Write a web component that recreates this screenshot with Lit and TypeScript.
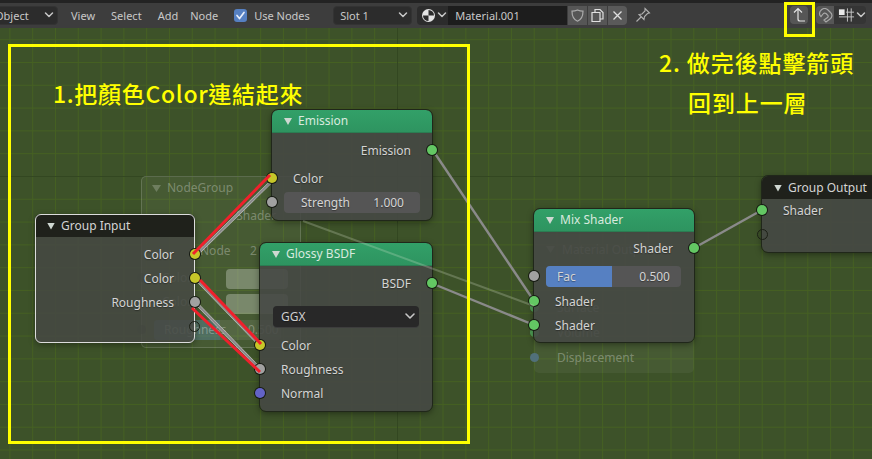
import { LitElement, html, svg, css, nothing } from "lit";
import { customElement } from "lit/decorators.js";

type Row = {
  h?: number;
  label?: string;
  side?: "in" | "out";
  sock?: string;
  field?: { name: string; value: string; fill?: number };
  select?: string;
};
type NodeDef = { x: number; y: number; w: number; h: number; title: string; kind: "green" | "dark"; sel?: boolean; pad: number; rows: Row[] };

const CANVAS_Y = 28;
const Y = "#c7c729", G = "#a1a1a1", S = "#63c763", B = "#6363c7", H = "hollow";

const NODES: NodeDef[] = [
  { x: 272, y: 110, w: 160, h: 110, title: "Emission", kind: "green", pad: 5, rows: [
    { label: "Emission", side: "out", sock: S }, { h: 4 },
    { label: "Color", side: "in", sock: Y },
    { side: "in", sock: G, field: { name: "Strength", value: "1.000" } },
  ] },
  { x: 35, y: 214, w: 160, h: 129, title: "Group Input", kind: "dark", sel: true, pad: 5, rows: [
    { label: "Color", side: "out", sock: Y },
    { label: "Color", side: "out", sock: Y },
    { label: "Roughness", side: "out", sock: G },
    { side: "out", sock: H },
  ] },
  { x: 260, y: 243, w: 172, h: 168, title: "Glossy BSDF", kind: "green", pad: 5, rows: [
    { label: "BSDF", side: "out", sock: S }, { h: 10 },
    { select: "GGX" }, { h: 4 },
    { label: "Color", side: "in", sock: Y },
    { label: "Roughness", side: "in", sock: G },
    { label: "Normal", side: "in", sock: B },
  ] },
  { x: 534, y: 209, w: 160, h: 133, title: "Mix Shader", kind: "green", pad: 4, rows: [
    { label: "Shader", side: "out", sock: S }, { h: 4 },
    { side: "in", sock: G, field: { name: "Fac", value: "0.500", fill: 49 } }, { h: 1 },
    { label: "Shader", side: "in", sock: S },
    { label: "Shader", side: "in", sock: S },
  ] },
  { x: 762, y: 176, w: 130, h: 76, title: "Group Output", kind: "dark", pad: -1, rows: [
    { label: "Shader", side: "in", sock: S },
    { side: "in", sock: H },
  ] },
];

const GREY_WIRES = [
  [196, 255, 273, 180], [195, 278, 260, 345], [195, 302, 260, 369],
  [432, 149, 534, 301], [431, 283, 534, 325], [694, 248, 762, 210],
];
const RED_WIRES = [[193, 254, 270, 175], [200, 280, 261, 344], [192, 308, 260, 372]];

const pos = (x: number, y: number, w?: number, h?: number) =>
  `left:${x}px;top:${y - CANVAS_Y}px;` + (w ? `width:${w}px;` : "") + (h ? `height:${h}px;` : "");

const chev = html`<svg class="chev" width="10" height="8" viewBox="0 0 10 8"><path d="M1.500 2l3.500 3.500L8.500 2" fill="none" stroke="#c8c8c8" stroke-width="1.500" stroke-linecap="round" stroke-linejoin="round"/></svg>`;

@customElement("app-root")
export class AppRoot extends LitElement {
  static styles = css`
    :host { display: block; width: 872px; height: 459px; overflow: hidden; position: relative;
      font-family: "Noto Sans", "Open Sans", sans-serif; background: #3d5229; }
    .top { height: 3px; background: #232323; }
    .bar { height: 25px; background: #3d3d3d; display: flex; align-items: center; color: #c8c8c8; font-size: 11px; position: relative;
      padding-bottom: 1px; box-sizing: border-box; }
    .bar > * { flex: none; }
    .dd { height: 19px; box-sizing: border-box; background: #2c2c2c; border: 1px solid #333; border-radius: 4px; display: flex; align-items: center; justify-content: space-between; padding: 0 3px 0 6px; }
    .dd.obj { width: 70px; margin-left: -12px; }
    .dd.slot { width: 79px; margin-left: 1px; }
    .menu.m1 { margin-left: 13px; }
    .menu.m2 { margin-left: 16px; }
    .menu.m3 { margin-left: 16px; }
    .menu.m4 { margin-left: 12px; }
    .check { width: 13px; height: 13px; border-radius: 3px; background: #5680c2; margin-left: 16px; display: flex; align-items: center; justify-content: center; }
    .usen { margin-left: 7px; width: 78px; }
    .ball { margin-left: 5px; width: 38px; height: 19px; background: #2c2c2c; border-radius: 4px 0 0 4px; display: flex; align-items: center; gap: 1px; padding-left: 4px; box-sizing: border-box; }
    .name { width: 119px; height: 19px; background: #1d1d1d; display: flex; align-items: center; padding-left: 7px; box-sizing: border-box; margin-left: -7px; }
    .ib { width: 19px; height: 19px; background: #565656; margin-left: 1px; display: flex; align-items: center; justify-content: center; }
    .ib.end { border-radius: 0 4px 4px 0; background: #5a5a5a; }
    .pin { margin-left: 5px; width: 22px; display: flex; justify-content: center; }
    .up { width: 18px; height: 18px; border-radius: 4px; background: #565656; margin-left: 136px; display: flex; align-items: center; justify-content: center; }
    .mag { width: 18px; height: 18px; background: #565656; border-radius: 4px 0 0 4px; margin-left: 8px; display: flex; align-items: center; justify-content: center; }
    .snap { width: 32px; height: 18px; background: #353535; border-radius: 0 4px 4px 0; display: flex; align-items: center; gap: 1px; padding-left: 4px; box-sizing: border-box; }

    .canvas { position: relative; height: 431px; background-color: #3d5229;
      background-image:
        linear-gradient(#334721, #334721),
        linear-gradient(#334721, #334721),
        linear-gradient(to right, #456022 1px, transparent 1px),
        linear-gradient(to bottom, #456022 1px, transparent 1px);
      background-size: 1px 100%, 100% 1px, 22.8px 100%, 100% 22.8px;
      background-position: 397px 0, 0 148px, 9.4px 0, 0 11.2px;
      background-repeat: no-repeat, no-repeat, repeat, repeat; }
    svg.wires { position: absolute; inset: 0; width: 872px; height: 431px; pointer-events: none; }

    .ghost { position: absolute; box-sizing: border-box; border: 1px solid rgba(255,255,255,.16); border-radius: 5px; background: rgba(255,255,255,.05); color: rgba(255,255,255,.3); font-size: 12px; }
    .ghost.noline { border-color: transparent; }
    .gt { position: absolute; white-space: nowrap; line-height: 16px; }
    .gs { position: absolute; border-radius: 4px; background: rgba(255,255,255,.28); }
    .gb { position: absolute; border-radius: 3px 0 0 3px; background: rgba(70,130,170,.3); }
    .gsock { position: absolute; width: 9px; height: 9px; border-radius: 50%; background: rgba(50,60,40,.55); }
    .gtri { position: absolute; width: 9px; height: 7px; background: rgba(255,255,255,.22); clip-path: polygon(0 0, 100% 0, 50% 100%); }

    .node { position: absolute; box-sizing: border-box; border-radius: 6px; background: rgba(70,72,68,.89); outline: 1px solid #20271a; box-shadow: 0 2px 7px rgba(0,0,0,.45); color: #d4d4d4; font-size: 12px; display: flex; flex-direction: column; }
    .node.sel { outline-color: #dcdcdc; outline-offset: -1px; box-shadow: 0 2px 6px rgba(0,0,0,.35); background: rgba(70,72,68,.86); }
    .hd { flex: none; display: flex; align-items: center; border-radius: 6px 6px 0 0; padding-left: 12px; padding-bottom: 1px; gap: 6px; box-sizing: border-box; height: 23px; }
    .hd.green { background: linear-gradient(#32a068, #2e9460); color: #d9eadf; border-bottom: 1px solid #2b7d52; }
    .hd.dark { background: #1f211b; color: #d4d4d4; }
    .tri { width: 8px; height: 7px; background: #cfd8d2; clip-path: polygon(0 0, 100% 0, 50% 100%); flex: none; margin-top: 2px; }
    .body { display: flex; flex-direction: column; }
    .row { height: 24px; position: relative; display: flex; align-items: center; white-space: nowrap; text-shadow: 0 1px 1px rgba(0,0,0,.35); flex: none; box-sizing: border-box; }
    .row.in { padding-left: 21px; }
    .row.out { justify-content: flex-end; padding-right: 21px; }
    .sock { position: absolute; top: 7px; width: 10px; height: 10px; border-radius: 50%; box-sizing: border-box; box-shadow: 0 0 0 1px #161a12; }
    .sock.in { left: -5px; }
    .sock.out { right: -5px; }
    .sock.hollow { background: transparent; box-shadow: none; border: 1px solid #1c2016; width: 11px; height: 11px; }
    .field { position: absolute; left: 12px; right: 12px; top: 2px; height: 21px; border-radius: 4px; background: #555; display: flex; align-items: center; justify-content: space-between; padding: 0 16px 1px 17px; overflow: hidden; box-sizing: border-box; }
    .field.mix { padding: 0 11px 1px 11px; left: 12px; right: 13px; }
    .fill { position: absolute; left: 0; top: 0; bottom: 0; background: #5680c2; }
    .field span { position: relative; }
    .select { position: absolute; left: 13px; right: 13px; top: 1px; height: 21px; border-radius: 4px; background: #282828; display: flex; align-items: center; justify-content: space-between; padding: 0 3px 1px 8px; color: #d0d0d0; box-sizing: border-box; box-shadow: 0 1px 0 #3d3d3d; }

    .frame { position: absolute; box-sizing: border-box; border: 3px solid #ffff00; pointer-events: none; }
    .frame.big { left: 8px; top: 44px; width: 462px; height: 400px; }
    .frame.btn { left: 784px; top: 2px; width: 31px; height: 35px; }
    .note { position: absolute; color: #ffff00; font-family: "Noto Sans CJK TC", "Noto Sans", sans-serif; font-weight: 500; font-size: 23px; line-height: 32px; white-space: nowrap; }
    .note.a { left: 53px; top: 77px; letter-spacing: .7px; }
    .note.b { left: 659px; top: 46px; letter-spacing: .9px; }
    .note.c { left: 688px; top: 86px; letter-spacing: .9px; }
  `;

  private sock(r: Row) {
    if (!r.sock) return nothing;
    const hollow = r.sock === H;
    return html`<i class="sock ${r.side} ${hollow ? "hollow" : ""}" style=${hollow ? "" : `background:${r.sock}`}></i>`;
  }

  private row(r: Row) {
    if (r.h) return html`<div style="height:${r.h}px;flex:none"></div>`;
    return html`<div class="row ${r.side ?? ""}">
      ${r.label ?? nothing}
      ${r.field ? html`<div class="field ${r.field.fill ? "mix" : ""}">
        ${r.field.fill ? html`<div class="fill" style="width:${r.field.fill}%"></div>` : nothing}
        <span>${r.field.name}</span><span>${r.field.value}</span></div>` : nothing}
      ${r.select ? html`<div class="select"><span>${r.select}</span><svg width="12" height="10" viewBox="0 0 12 10"><path d="M2 3l4 4 4-4" fill="none" stroke="#c8c8c8" stroke-width="1.600" stroke-linecap="round" stroke-linejoin="round"/></svg></div>` : nothing}
      ${this.sock(r)}
    </div>`;
  }

  private node(n: NodeDef) {
    return html`<div class="node ${n.sel ? "sel" : ""}" style=${pos(n.x, n.y, n.w, n.h)}>
      <div class="hd ${n.kind}"><i class="tri"></i><span>${n.title}</span></div>
      <div class="body" style="margin-top:${n.pad}px">${n.rows.map((r) => this.row(r))}</div>
    </div>`;
  }

  private ghosts() {
    return html`
      <div class="ghost" style=${pos(141, 176, 160, 172)}>
        <i class="gtri" style="left:10px;top:8px"></i>
        <span class="gt" style="left:25px;top:3px">NodeGroup</span>
        <span class="gt" style="right:24px;top:31px">Shader</span>
        <span class="gt" style="left:58px;top:66px">Node</span>
        <span class="gt" style="left:108px;top:66px">2</span>
        <i class="gs" style="left:84px;top:92px;width:62px;height:20px"></i>
        <i class="gs" style="left:84px;top:117px;width:62px;height:20px"></i>
        <span class="gt" style="left:20px;top:93px">Color</span>
        <span class="gt" style="left:20px;top:117px">Color</span>
        <i class="gs" style="left:12px;top:143px;width:127px;height:20px;background:rgba(255,255,255,.08)"></i>
        <i class="gb" style="left:12px;top:143px;width:66px;height:20px"></i>
        <span class="gt" style="left:22px;top:145px">Roughness</span>
        <span class="gt" style="left:106px;top:145px">0.500</span>
        <i class="gsock" style="left:-5px;top:96px"></i>
        <i class="gsock" style="left:-5px;top:120px"></i>
        <i class="gsock" style="left:-5px;top:148px"></i>
      </div>
      <div class="ghost noline" style=${pos(534, 234, 160, 139)}>
        <i class="gtri" style="left:11px;top:11px"></i>
        <span class="gt" style="left:27px;top:7px">Material Output</span>
        <span class="gt" style="left:22px;top:65px">Surface</span>
        <span class="gt" style="left:22px;top:90px">Volume</span>
        <span class="gt" style="left:22px;top:115px">Displacement</span>
        <i class="gsock" style="left:-5px;top:68px;background:#4f9f55"></i>
        <i class="gsock" style="left:-5px;top:93px;background:#4f9f55"></i>
        <i class="gsock" style="left:-5px;top:118px;background:#51707a"></i>
      </div>`;
  }

  render() {
    return html`
      <div class="top"></div>
      <div class="bar">
        <div class="dd obj"><span>Object</span>${chev}</div>
        <span class="menu m1">View</span><span class="menu m2">Select</span><span class="menu m3">Add</span><span class="menu m4">Node</span>
        <div class="check"><svg width="11" height="11" viewBox="0 0 11 11"><path d="M2 5.500l2.500 3L9 2.500" fill="none" stroke="#e8eefa" stroke-width="1.700" stroke-linecap="round" stroke-linejoin="round"/></svg></div>
        <span class="usen">Use Nodes</span>
        <div class="dd slot"><span>Slot 1</span>${chev}</div>
        <div class="ball">
          <svg width="15" height="15" viewBox="0 0 15 15"><circle cx="7.500" cy="7.500" r="6.500" fill="#e4e4e4"/><path d="M7.500 2a5.500 5.500 0 0 1 5.500 5.500H7.500z" fill="#2c2c2c"/><path d="M2 7.500h5.500V13A5.500 5.500 0 0 1 2 7.500z" fill="#2c2c2c"/></svg>
          ${chev}
        </div>
        <div class="name">Material.001</div>
        <div class="ib"><svg width="15" height="15" viewBox="0 0 15 15"><path d="M7.500 2c2 .9 3.700 1.200 5.500 1.200 0 5-1.600 8.300-5.500 10C3.600 11.500 2 8.200 2 3.200 3.800 3.200 5.500 2.900 7.500 2z" fill="none" stroke="#aaa" stroke-width="1.200"/></svg></div>
        <div class="ib"><svg width="15" height="15" viewBox="0 0 15 15"><path d="M5 4V1.500h5l3 3V11h-3M2 4.500h8V13.500H2z" fill="none" stroke="#e0e0e0" stroke-width="1.200"/></svg></div>
        <div class="ib end"><svg width="11" height="11" viewBox="0 0 11 11"><path d="M1.500 1.500l8 8M9.500 1.500l-8 8" stroke="#e0e0e0" stroke-width="1.300"/></svg></div>
        <div class="pin"><svg width="16" height="16" viewBox="0 0 16 16"><path d="M10 1.500l4.500 4.500-2 .5-3 3-.5 3L4 7.500l3-.5 3-3zM6 10l-4.500 4.500" fill="none" stroke="#b0b0b0" stroke-width="1.100"/></svg></div>
        <div class="up"><svg width="14" height="16" viewBox="0 0 14 16"><path d="M2 5.500L6 1.500l4 4M6 1.500V12a2 2 0 0 0 2 2h5" fill="none" stroke="#e4e4e4" stroke-width="1.200"/></svg></div>
        <div class="mag"><svg width="15" height="15" viewBox="0 0 15 15"><path d="M3 8.500l-1-1a5 5 0 0 1 7.500-6l3 3a4 4 0 0 1-.5 6.500L8 14l-2-2 3.500-2.500a1.500 1.500 0 0 0 0-2.500L8 5.500a2 2 0 0 0-3 .5z" fill="none" stroke="#a8a8a8" stroke-width="1.200"/></svg></div>
        <div class="snap">
          <svg width="17" height="16" viewBox="0 0 18 16"><path d="M1 2h6v6H1z" fill="#e8e8e8"/><path d="M10 1v14M14 1v14M1 10h16M8.500 5h8.500" stroke="#c8c8c8" stroke-width="1"/></svg>
          ${chev}
        </div>
      </div>
      <div class="canvas">
        ${this.ghosts()}
        <svg class="wires" viewBox="0 28 872 431">
          ${GREY_WIRES.slice(0, 3).map(([a, b, c, d]) => svg`<line x1=${a} y1=${b} x2=${c} y2=${d} stroke="#dcdcdc" stroke-width="3"/>`)}
          ${GREY_WIRES.map(([a, b, c, d]) => svg`<line x1=${a} y1=${b} x2=${c} y2=${d} stroke="#8a8a8a" stroke-width="2.400"/>`)}
        </svg>
        ${NODES.map((n) => this.node(n))}
        <svg class="wires" viewBox="0 28 872 431">
          <line x1="303" y1="221" x2="534" y2="306" stroke="rgba(225,235,215,.24)" stroke-width="2"/>
          ${RED_WIRES.map(([a, b, c, d]) => svg`<line x1=${a} y1=${b} x2=${c} y2=${d} stroke="#f0202c" stroke-width="3"/>`)}
        </svg>
      </div>
      <div class="frame big"></div>
      <div class="frame btn"></div>
      <div class="note a">1.把顏色Color連結起來</div>
      <div class="note b">2. 做完後點擊箭頭</div>
      <div class="note c">回到上一層</div>
    `;
  }
}
